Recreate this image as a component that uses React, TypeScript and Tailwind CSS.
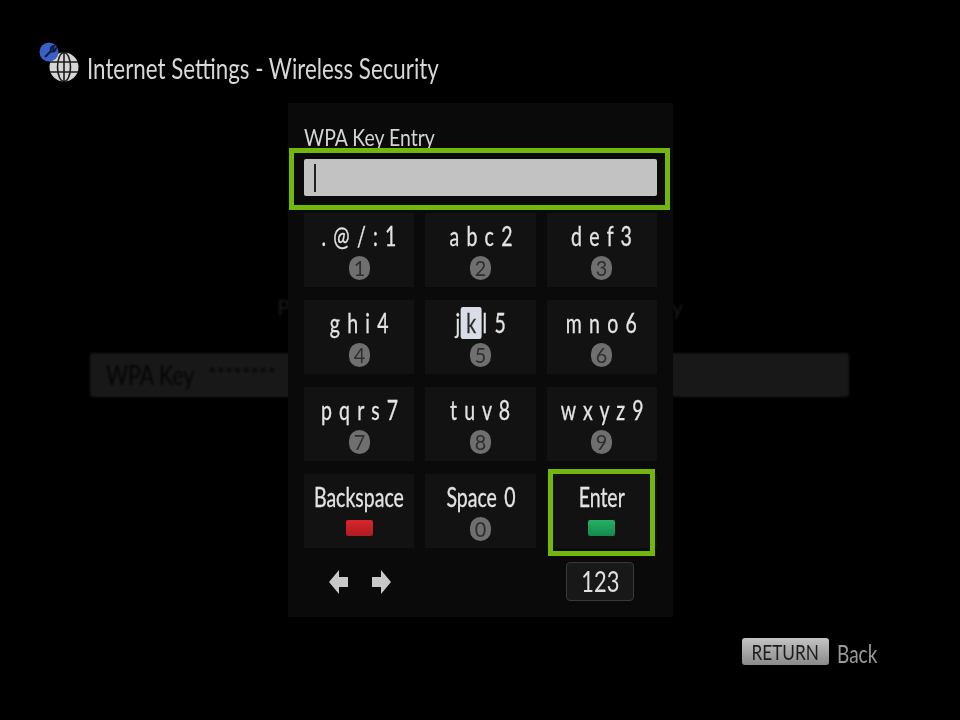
const FONT = "font-['Lato','Liberation_Sans',sans-serif]";

type KeyDef = { label: string; num: string };

const KEYS: KeyDef[] = [
  { label: '. @ / : 1', num: '1' },
  { label: 'a b c 2', num: '2' },
  { label: 'd e f 3', num: '3' },
  { label: 'g h i 4', num: '4' },
  { label: 'j k l 5', num: '5' },
  { label: 'm n o 6', num: '6' },
  { label: 'p q r s 7', num: '7' },
  { label: 't u v 8', num: '8' },
  { label: 'w x y z 9', num: '9' },
];

function NumBadge({ n }: { n: string }) {
  return (
    <div className="w-[21px] h-[24px] rounded-full bg-[#6f6f6f] text-[#2e2e2e] text-[22px] leading-[24px] text-center">
      <span className="inline-block scale-x-90">{n}</span>
    </div>
  );
}

function ColorKey({ color }: { color: string }) {
  return <div className={`w-[27px] h-[16px] rounded-[2px] bg-gradient-to-b ${color}`} />;
}

function Key({ children, badge }: { children: React.ReactNode; badge: React.ReactNode }) {
  return (
    <div className="h-[74px] bg-[#121212] flex flex-col items-center pt-[7px] blur-[0.5px]">
      <div className="h-[32px] text-[26px] leading-[32px] text-[#e4e4e4] whitespace-nowrap scale-x-75 [word-spacing:3px] [-webkit-text-stroke-width:0.3px]">
        {children}
      </div>
      <div className="mt-[4px]">{badge}</div>
    </div>
  );
}

function Globe() {
  return (
    <svg width="44" height="46" viewBox="0 0 44 46" className="shrink-0 blur-[0.4px]">
      <circle cx="25" cy="28" r="14.5" fill="#d6d6d6" />
      <g stroke="#1c1c1c" strokeWidth="1.6" fill="none">
        <ellipse cx="25" cy="28" rx="6.5" ry="14.5" />
        <path d="M25 13.5v29M11 23h28M11 33h28" />
      </g>
      <circle cx="10" cy="13" r="9.5" fill="#3a60c4" />
      <path d="M6 18l6-6M12 12a3.4 3.4 0 0 1 3-5l-1.6 2.4 1.6 1.6 2-1.6a3.4 3.4 0 0 1-5 2.6" stroke="#0d1b45" strokeWidth="2" fill="none" />
    </svg>
  );
}

export default function App() {
  return (
    <div className={`relative w-[960px] h-[720px] overflow-hidden bg-black ${FONT}`}>
      {/* dimmed settings page behind the dialog */}
      <div className="flex items-start pl-[39px] pt-[39px] h-[90px]">
        <Globe />
        <div className="ml-[4px] mt-[11px] text-[29px] leading-[36px] text-[#d8d8d8] whitespace-nowrap origin-left scale-x-[0.77] blur-[0.5px]">
          Internet Settings - Wireless Security
        </div>
      </div>
      <div className="flex justify-between pl-[277px] pr-[277px] mt-[202px] h-[30px] text-[22px] leading-[30px] text-[#191919] blur-[0.8px]">
        <span>P</span>
        <span>y</span>
      </div>
      <div className="ml-[90px] mt-[31px] w-[759px] h-[44px] rounded-[3px] bg-[#181818] flex items-center pl-[16px] text-[#050505] blur-[1px]">
        <span className="w-[102px] text-[26px] whitespace-nowrap origin-left scale-x-[0.82]">WPA Key</span>
        <span className="text-[20px] -mt-[4px] whitespace-nowrap">********</span>
      </div>
      <div className="flex justify-end items-center gap-[8px] pr-[83px] mt-[239px]">
        <div className="w-[87px] h-[27px] rounded-[3px] bg-gradient-to-b from-[#c4c4c4] to-[#8a8a8a] text-[#1c1c1c] text-[22px] leading-[27px] text-center whitespace-nowrap blur-[0.4px]">
          <span className="inline-block scale-x-[0.78]">RETURN</span>
        </div>
        <span className="w-[40px] mt-[4px] text-[25px] leading-[27px] text-[#9a9a9a] whitespace-nowrap origin-left scale-x-[0.76] blur-[0.4px]">Back</span>
      </div>

      {/* key entry dialog */}
      <div className="absolute left-[288px] top-[103px] w-[385px] h-[514px] bg-[#0a0a0a] px-[16px] pt-[18px]">
        <div className="h-[38px] text-[24px] leading-[32px] text-[#d4d4d4] origin-left scale-x-[0.81] whitespace-nowrap blur-[0.4px]">
          WPA Key Entry
        </div>
        <div className="h-[37px] rounded-[2px] bg-[#c2c2c2] flex items-center pl-[10px] blur-[0.3px]">
          <div className="w-[2px] h-[28px] bg-[#222]" />
        </div>
        <div className="absolute left-[1px] top-[45px] w-[381px] h-[62px] border-[5px] border-[#73b70d]" />

        <div className="grid grid-cols-3 gap-x-[11px] gap-y-[13px] mt-[17px]">
          {KEYS.map((k) => (
            <Key key={k.num} badge={<NumBadge n={k.num} />}>
              {k.num === '5' ? (
                <>
                  j<span className="inline-block w-[28px] h-[32px] mx-[1px] rounded-[3px] bg-[#d8dde6] text-[#2a2a2a] text-center">k</span>l 5
                </>
              ) : (
                k.label
              )}
            </Key>
          ))}
          <Key badge={<div className="mt-[3px]"><ColorKey color="from-[#d8252c] to-[#b01c22]" /></div>}>Backspace</Key>
          <Key badge={<NumBadge n="0" />}>Space 0</Key>
          <div className="relative">
            <Key badge={<div className="mt-[3px]"><ColorKey color="from-[#25b066] to-[#168a4c]" /></div>}>Enter</Key>
            <div className="absolute left-[1px] -top-[5px] w-[107px] h-[87px] border-[5px] border-[#73b70d]" />
          </div>
        </div>

        <div className="flex items-center justify-between mt-[14px] pl-[25px] pr-[23px]">
          <div className="flex gap-[24px] blur-[0.3px]">
            <svg width="19" height="24" viewBox="0 0 19 24">
              <path d="M0 12 10 0v7h9v10h-9v7z" fill="#c8c8c8" />
            </svg>
            <svg width="19" height="24" viewBox="0 0 19 24">
              <path d="M19 12 9 0v7H0v10h9v7z" fill="#c8c8c8" />
            </svg>
          </div>
          <div className="w-[68px] h-[39px] rounded-[4px] border border-[#3a3a3a] bg-[#181818] text-[#e0e0e0] text-[28px] leading-[37px] text-center blur-[0.3px]">
            <span className="inline-block scale-x-[0.78]">123</span>
          </div>
        </div>
      </div>
    </div>
  );
}
